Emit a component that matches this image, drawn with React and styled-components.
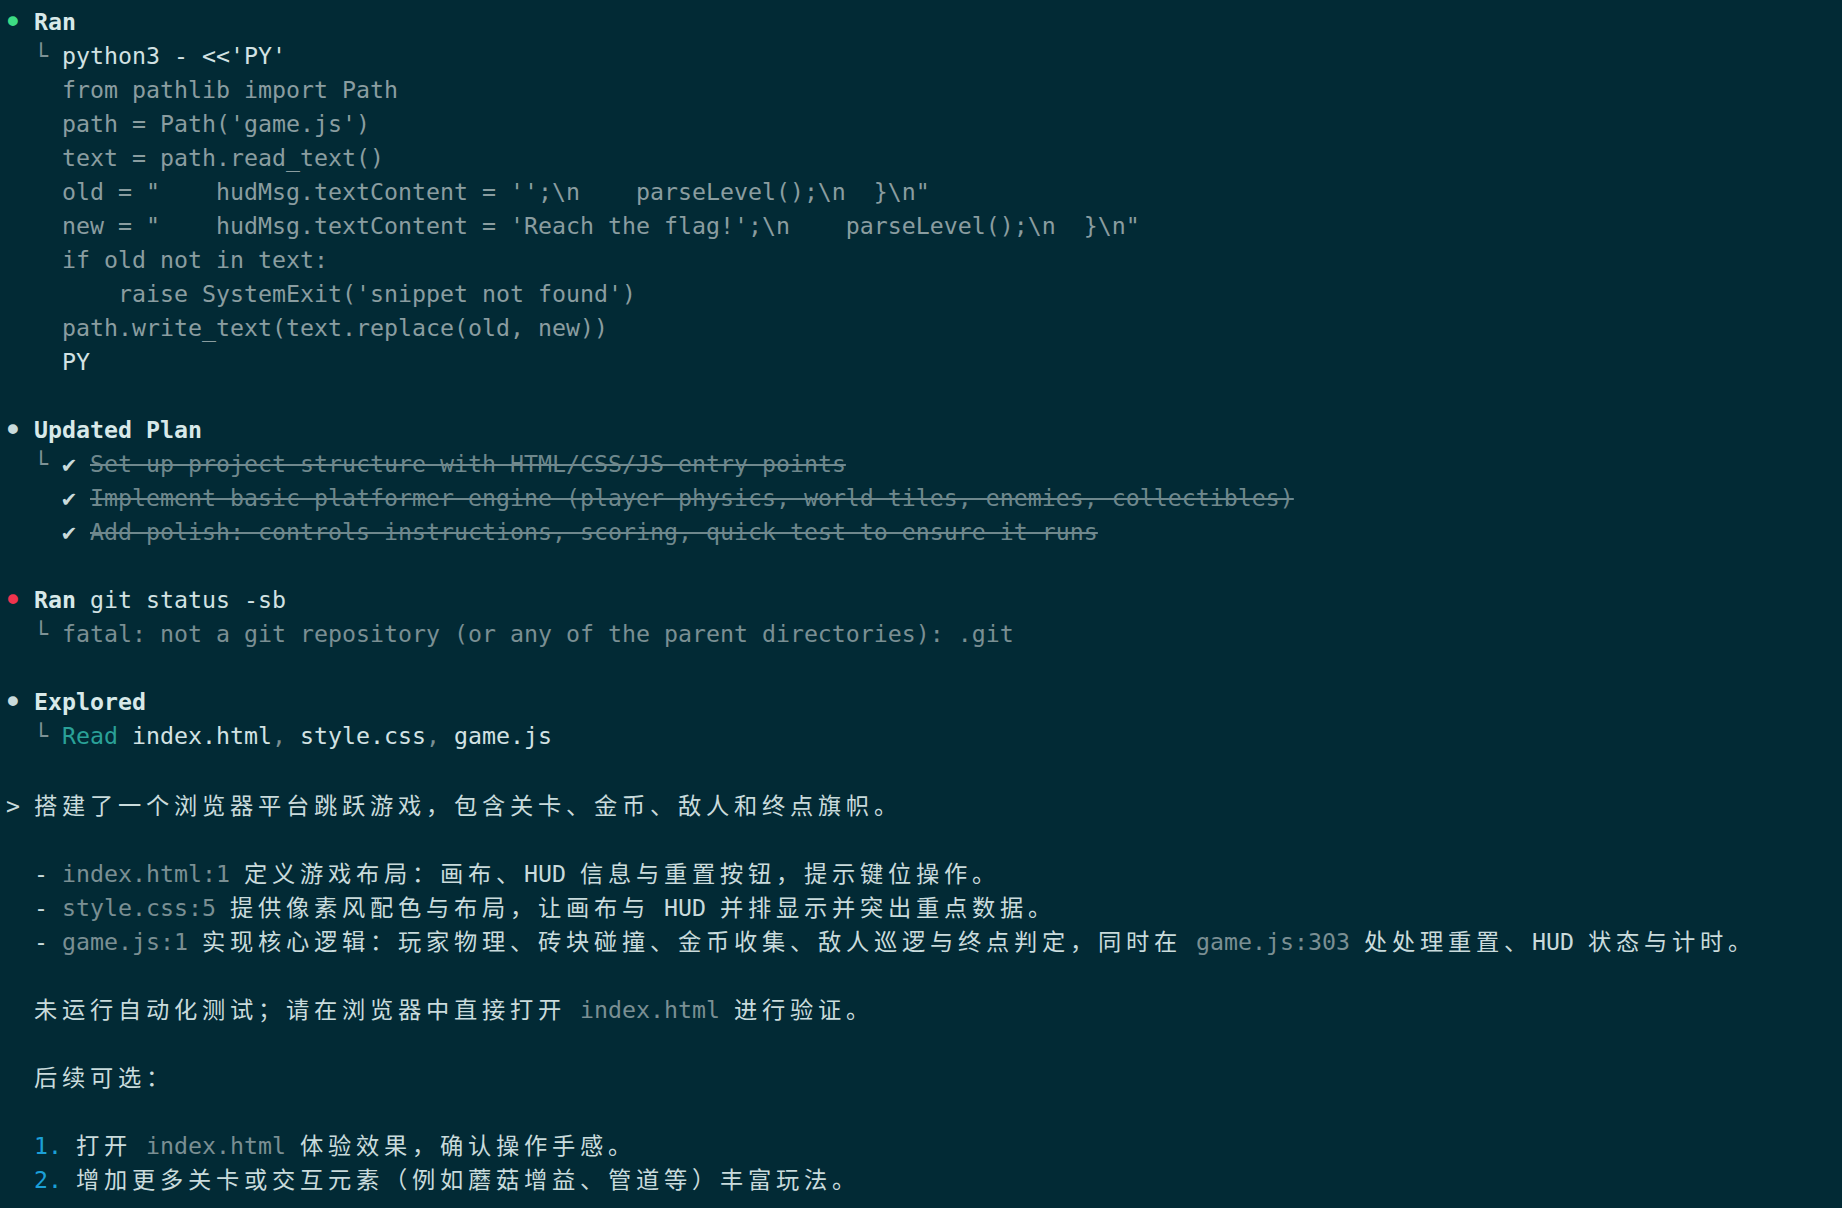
import React from 'react'
import styled, { createGlobalStyle } from 'styled-components';

const GlobalStyle = createGlobalStyle`
    html, body {
        margin: 0;
        background: #022a35;
    }
`;

const Screen = styled.div`
    min-height: 100vh;
    box-sizing: border-box;
    padding: 5px 0 0 6px;
    background: #022a35;
    color: #c9dbdc;
    font-family: "DejaVu Sans Mono", "Noto Sans CJK SC", monospace;
    font-size: 23.25px;
    line-height: 34px;
`;

const Row = styled.div`
    height: 34px;
    white-space: pre;
`;

const Bullet = styled.span`
    display: inline-block;
    transform: scale(1.45);
    color: ${props => props.$color || '#c9dbdc'};
`;

const Head = styled.span`
    font-weight: 700;
    color: #d8e9e9;
`;

const Branch = styled.span`
    color: #7d9296;
`;

const Cmd = styled.span`
    color: #d2e2e3;
`;

const Code = styled.span`
    color: #8a9da0;
`;

const Muted = styled.span`
    color: #7a8f93;
`;

const Struck = styled.span`
    color: #6f888d;
    text-decoration: line-through;
    text-decoration-thickness: 2px;
`;

const Check = styled.span`
    color: #c9dbdc;
`;

const Accent = styled.span`
    color: #2aa198;
`;

const Num = styled.span`
    color: #1ba0d8;
`;

const Wide = styled.span`
    font-family: "Noto Sans CJK SC", sans-serif;
    letter-spacing: 4.75px;
`;

// terminal cells: CJK glyphs take two columns
const cjk = (text) =>
    text.split(/([\u3000-\u303f\u4e00-\u9fff\uff00-\uffef]+)/).map((part, i) =>
        i % 2 ? <Wide key={i}>{part}</Wide> : part
    );

const codeLines = [
    "from pathlib import Path",
    "path = Path('game.js')",
    "text = path.read_text()",
    `old = "    hudMsg.textContent = '';\\n    parseLevel();\\n  }\\n"`,
    `new = "    hudMsg.textContent = 'Reach the flag!';\\n    parseLevel();\\n  }\\n"`,
    "if old not in text:",
    "    raise SystemExit('snippet not found')",
    "path.write_text(text.replace(old, new))",
];

const planItems = [
    "Set up project structure with HTML/CSS/JS entry points",
    "Implement basic platformer engine (player physics, world tiles, enemies, collectibles)",
    "Add polish: controls instructions, scoring, quick test to ensure it runs",
];

const notes = [
    { file: "index.html:1", text: "定义游戏布局：画布、HUD 信息与重置按钮，提示键位操作。" },
    { file: "style.css:5", text: "提供像素风配色与布局，让画布与 HUD 并排显示并突出重点数据。" },
    { file: "game.js:1", text: "实现核心逻辑：玩家物理、砖块碰撞、金币收集、敌人巡逻与终点判定，同时在", ref: "game.js:303", tail: "处处理重置、HUD 状态与计时。" },
];

const App = () => {
  return (
    <Screen>
        <GlobalStyle />
        <Row><Bullet $color="#3ddc84">•</Bullet> <Head>Ran</Head></Row>
        <Row>  <Branch>└</Branch> <Cmd>python3 - &lt;&lt;'PY'</Cmd></Row>
        {codeLines.map(line => (
            <Row key={line}>    <Code>{line}</Code></Row>
        ))}
        <Row>    <Cmd>PY</Cmd></Row>
        <Row />
        <Row><Bullet>•</Bullet> <Head>Updated Plan</Head></Row>
        {planItems.map((item, i) => (
            <Row key={item}>  {i === 0 ? <Branch>└</Branch> : ' '} <Check>✔</Check> <Struck>{item}</Struck></Row>
        ))}
        <Row />
        <Row><Bullet $color="#f0344e">•</Bullet> <Head>Ran</Head> <Cmd>git status -sb</Cmd></Row>
        <Row>  <Branch>└</Branch> <Muted>fatal: not a git repository (or any of the parent directories): .git</Muted></Row>
        <Row />
        <Row><Bullet>•</Bullet> <Head>Explored</Head></Row>
        <Row>  <Branch>└</Branch> <Accent>Read</Accent> <Cmd>index.html</Cmd><Muted>, </Muted><Cmd>style.css</Cmd><Muted>, </Muted><Cmd>game.js</Cmd></Row>
        <Row />
        <Row>&gt; {cjk("搭建了一个浏览器平台跳跃游戏，包含关卡、金币、敌人和终点旗帜。")}</Row>
        <Row />
        {notes.map(note => (
            <Row key={note.file}>  - <Muted>{note.file}</Muted> {cjk(note.text)}{note.ref && <> <Muted>{note.ref}</Muted> {cjk(note.tail)}</>}</Row>
        ))}
        <Row />
        <Row>  {cjk("未运行自动化测试；请在浏览器中直接打开")} <Muted>index.html</Muted> {cjk("进行验证。")}</Row>
        <Row />
        <Row>  {cjk("后续可选：")}</Row>
        <Row />
        <Row>  <Num>1.</Num> {cjk("打开")} <Muted>index.html</Muted> {cjk("体验效果，确认操作手感。")}</Row>
        <Row>  <Num>2.</Num> {cjk("增加更多关卡或交互元素（例如蘑菇增益、管道等）丰富玩法。")}</Row>
    </Screen>
  )
}

export default App
